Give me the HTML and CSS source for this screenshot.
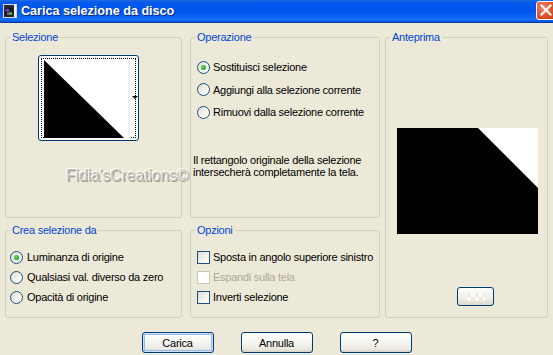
FILE: index.html
```html
<!DOCTYPE html>
<html lang="it">
<head>
<meta charset="utf-8">
<title>Carica selezione da disco</title>
<link rel="stylesheet" href="styles.css">
</head>
<body>
<div class="window">
  <div class="titlebar">
    <svg class="app-icon" width="16" height="16" viewBox="0 0 16 16">
      <rect x="1.5" y="1.5" width="13" height="13" fill="#2a2a34" stroke="#d8d8e0"/>
      <circle cx="7" cy="9" r="4.5" fill="#14141a"/>
      <circle cx="5.5" cy="7.5" r="2" fill="#6a3bbf"/>
      <circle cx="8.5" cy="10.5" r="1.8" fill="#2fbf4a"/>
      <circle cx="6" cy="11" r="1.2" fill="#d03a8c"/>
      <rect x="12" y="2" width="2" height="12" fill="#f2f2f2"/>
    </svg>
    <span class="title">Carica selezione da disco</span>
    <div class="close">
      <svg width="21" height="19" viewBox="0 0 21 19">
        <path d="M5.5 4.5 L14.5 13.5 M14.5 4.5 L5.5 13.5" stroke="#fff" stroke-width="2.2" stroke-linecap="square"/>
      </svg>
    </div>
  </div>

  <div class="content">
    <fieldset class="group g-sel">
      <legend>Selezione</legend>
      <div class="imgbtn">
        <div class="focus">
          <svg width="86" height="78" viewBox="0 0 86 78">
            <rect x="0" y="0" width="84" height="78" fill="#fff"/>
            <rect x="84" y="0" width="2" height="78" fill="#f0f0f0"/>
            <polygon points="0,0 0,78 80,78" fill="#000"/>
          </svg>
        </div>
        <span class="arrow"></span>
      </div>
    </fieldset>

    <fieldset class="group g-op">
      <legend>Operazione</legend>
      <div class="opt-list wide">
        <label class="opt"><span class="radio on"></span>Sostituisci selezione</label>
        <label class="opt"><span class="radio"></span>Aggiungi alla selezione corrente</label>
        <label class="opt"><span class="radio"></span>Rimuovi dalla selezione corrente</label>
      </div>
      <p class="note">Il rettangolo originale della selezione<br>intersecherà completamente la tela.</p>
    </fieldset>

    <fieldset class="group g-prev">
      <legend>Anteprima</legend>
      <svg class="preview" width="141" height="106" viewBox="0 0 141 106">
        <rect width="141" height="106" fill="#000"/>
        <polygon points="81,0 141,0 141,60" fill="#fff"/>
      </svg>
      <div class="smallbtn">
        <span class="chk"></span>
      </div>
    </fieldset>

    <fieldset class="group g-crea">
      <legend>Crea selezione da</legend>
      <div class="opt-list">
        <label class="opt"><span class="radio on"></span>Luminanza di origine</label>
        <label class="opt"><span class="radio"></span>Qualsiasi val. diverso da zero</label>
        <label class="opt"><span class="radio"></span>Opacità di origine</label>
      </div>
    </fieldset>

    <fieldset class="group g-opt">
      <legend>Opzioni</legend>
      <div class="opt-list">
        <label class="opt"><span class="check"></span>Sposta in angolo superiore sinistro</label>
        <label class="opt disabled"><span class="check"></span>Espandi sulla tela</label>
        <label class="opt"><span class="check"></span>Inverti selezione</label>
      </div>
    </fieldset>
  </div>

  <div class="buttons">
    <button class="btn default">Carica</button>
    <button class="btn">Annulla</button>
    <button class="btn">?</button>
  </div>

  <div class="watermark">Fidia'sCreations©</div>
</div>
</body>
</html>
```

FILE: styles.css
```css
html, body {
  margin: 0;
  padding: 0;
}
body {
  width: 553px;
  height: 355px;
  overflow: hidden;
  background: #ece9d8;
  font-family: "Liberation Sans", Arial, sans-serif;
  font-size: 11px;
  letter-spacing: -0.25px;
  color: #000;
}
.window {
  position: relative;
  width: 553px;
  height: 355px;
}

/* Title bar */
.titlebar {
  height: 22px;
  display: flex;
  align-items: center;
  overflow: hidden;
  border-bottom: 1px solid #0a3aa8;
  background: linear-gradient(#1f6ee8 0%, #0a5ce8 8%, #0058ee 20%, #0055ea 55%, #0b63f4 78%, #1670fa 88%, #0450dc 100%);
}
.app-icon {
  flex: none;
  margin-left: 2px;
}
.title {
  margin-left: 3px;
  color: #fff;
  font-weight: bold;
  font-size: 12.6px;
  letter-spacing: 0;
  text-shadow: 1px 1px 0 #0a2a8a;
}
.close {
  flex: none;
  margin-left: auto;
  margin-right: -4px;
  width: 21px;
  height: 19px;
  margin-top: -1px;
  box-sizing: border-box;
  border: 1px solid #fff;
  border-radius: 3px;
  background: radial-gradient(circle at 30% 30%, #f08060, #e0502a 55%, #c43a1a);
  display: flex;
}
.close svg {
  margin: -1px;
}

/* Content grid */
.content {
  display: grid;
  grid-template-columns: 177px 8px 190px 5px 163px;
  grid-template-rows: 188px 95px;
  row-gap: 5px;
  padding: 7px 0 0 5px;
}
.group {
  margin: 0;
  padding: 0;
  min-width: 0;
  border: 1px solid #d0d0bf;
  border-radius: 3px;
  box-sizing: border-box;
}
.group legend {
  margin-left: 4px;
  padding: 0 2px;
  color: #0046d5;
  line-height: 14px;
}
.g-sel { grid-column: 1; grid-row: 1; }
.g-op { grid-column: 3; grid-row: 1; }
.g-prev { grid-column: 5; grid-row: 1 / 3; }
.g-crea { grid-column: 1; grid-row: 2; }
.g-opt { grid-column: 3; grid-row: 2; }

/* Selezione image button */
.imgbtn {
  position: relative;
  box-sizing: border-box;
  width: 101px;
  height: 86px;
  margin: 11px 0 0 32px;
  padding: 2px;
  border: 1px solid #003c74;
  border-radius: 3px;
  background: #fff;
}
.focus {
  box-sizing: border-box;
  height: 100%;
  border: 1px dotted #000;
  padding: 1px 0 0 2px;
  display: flex;
}
.arrow {
  position: absolute;
  left: 93px;
  top: 40px;
  width: 0;
  height: 0;
  border-left: 3px solid transparent;
  border-right: 3px solid transparent;
  border-top: 3px solid #000;
}

/* Option lists */
.opt-list {
  display: flex;
  flex-direction: column;
  padding: 10px 0 0 4px;
}
.opt-list.wide {
  padding: 12px 0 0 6px;
}
.opt {
  display: flex;
  align-items: center;
  gap: 4px;
  height: 20px;
}
.wide .opt {
  height: 22.5px;
  gap: 3px;
}
.g-opt .opt-list {
  padding-left: 6px;
}
.g-opt .opt {
  gap: 3px;
}
.radio {
  flex: none;
  position: relative;
  width: 13px;
  height: 13px;
  box-sizing: border-box;
  border: 1px solid #1c5180;
  border-radius: 50%;
  background: linear-gradient(135deg, #dcdad2 0%, #f4f3ee 55%, #fff 100%);
}
.radio.on::after {
  content: "";
  position: absolute;
  left: 3px;
  top: 3px;
  width: 5px;
  height: 5px;
  border-radius: 50%;
  background: radial-gradient(circle at 40% 40%, #66dd66, #21a121 70%);
}
.check {
  flex: none;
  width: 13px;
  height: 13px;
  box-sizing: border-box;
  border: 1px solid #1c5180;
  background: linear-gradient(135deg, #dcdad2 0%, #f4f3ee 55%, #fff 100%);
}
.opt.disabled {
  color: #aca899;
}
.opt.disabled .check {
  border-color: #cac8bb;
  background: #fff;
}
.note {
  margin: 30px 0 0 2px;
  line-height: 12px;
}

/* Preview */
.preview {
  display: block;
  margin: 84px 0 0 11px;
}
.smallbtn {
  box-sizing: border-box;
  width: 37px;
  height: 19px;
  margin: 53px 0 0 71px;
  border: 1px solid #003c74;
  border-radius: 3px;
  background: linear-gradient(#fdfdfb, #f0efe8 60%, #dedbd0);
  display: flex;
  align-items: center;
  justify-content: center;
}
.chk {
  width: 18px;
  height: 8px;
  background:
    repeating-conic-gradient(#ffffff 0 25%, #ebe9e2 0 50%) 0 0 / 8px 8px;
  opacity: 0.9;
}

/* Buttons */
.buttons {
  display: flex;
  justify-content: center;
  gap: 27px;
  margin-top: 14px;
}
.btn {
  width: 72px;
  height: 21px;
  padding: 0;
  font-family: "Liberation Sans", Arial, sans-serif;
  font-size: 11px;
  letter-spacing: -0.25px;
  color: #000;
  border: 1px solid #003c74;
  border-radius: 3px;
  background: linear-gradient(#ffffff 0%, #f6f6f2 45%, #ecebe5 80%, #d8d4c8 100%);
}
.btn.default {
  box-shadow: inset 0 0 0 1px #cde0fb, inset 0 0 0 2px #9bbbec;
}

/* Watermark */
.watermark {
  position: absolute;
  left: 66px;
  top: 167px;
  font-size: 16px;
  color: #c9c6bd;
  letter-spacing: -0.2px;
  text-shadow: -1px -1px 0 #ffffff, 1px 1px 0 #9a978f;
}
```
